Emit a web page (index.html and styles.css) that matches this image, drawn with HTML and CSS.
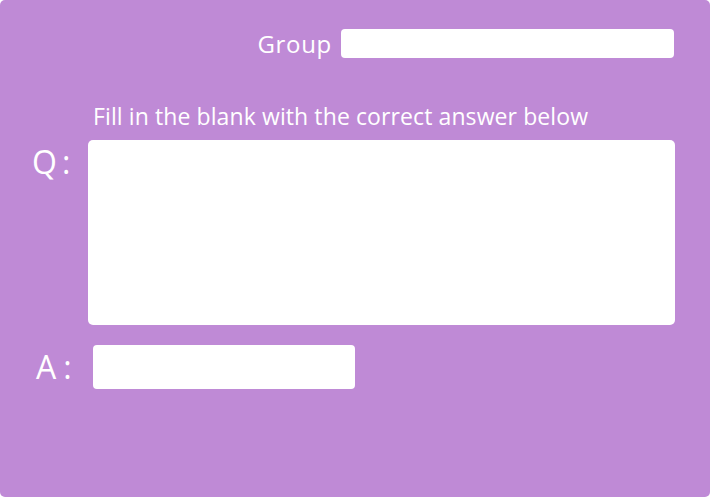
FILE: index.html
```html
<!DOCTYPE html>
<html>
<head>
<meta charset="utf-8">
<link rel="stylesheet" href="styles.css">
</head>
<body>
<div class="card">
  <div class="group-row">
    <span class="group-label">Group</span>
    <div class="group-input"></div>
  </div>
  <div class="instructions">Fill in the blank with the correct answer below</div>
  <div class="q-row">
    <span class="big-label q-label">Q:</span>
    <div class="q-box"></div>
  </div>
  <div class="a-row">
    <span class="big-label a-label">A:</span>
    <div class="a-box"></div>
  </div>
</div>
</body>
</html>
```

FILE: styles.css
```css
html, body {
  margin: 0;
  padding: 0;
  background: #ffffff;
}
.card {
  width: 710px;
  height: 497px;
  background: #bf8ad6;
  border-radius: 5px;
  box-sizing: border-box;
  padding-top: 29px;
  font-family: "Open Sans", "Noto Sans", sans-serif;
  color: #ffffff;
}
.group-row {
  display: flex;
  justify-content: flex-end;
  align-items: center;
  gap: 9px;
  padding-right: 36px;
}
.group-label {
  font-size: 24px;
  line-height: 29px;
  letter-spacing: 0.7px;
}
.group-input {
  width: 333px;
  height: 29px;
  background: #fff;
  border-radius: 4px;
}
.instructions {
  margin-top: 44px;
  padding-left: 93px;
  font-size: 23px;
  line-height: 28px;
  letter-spacing: 0.1px;
}
.q-row {
  display: flex;
  align-items: flex-start;
  margin-top: 10px;
  padding-left: 32px;
}
.big-label {
  font-size: 32px;
  line-height: 40px;
}
.q-label {
  width: 56px;
  margin-top: 2px;
  letter-spacing: 5px;
}
.q-box {
  width: 587px;
  height: 185px;
  background: #fff;
  border-radius: 5px;
}
.a-row {
  display: flex;
  align-items: center;
  margin-top: 20px;
  padding-left: 36px;
}
.a-label {
  width: 57px;
  letter-spacing: 7px;
}
.a-box {
  width: 262px;
  height: 44px;
  background: #fff;
  border-radius: 4px;
}
```
